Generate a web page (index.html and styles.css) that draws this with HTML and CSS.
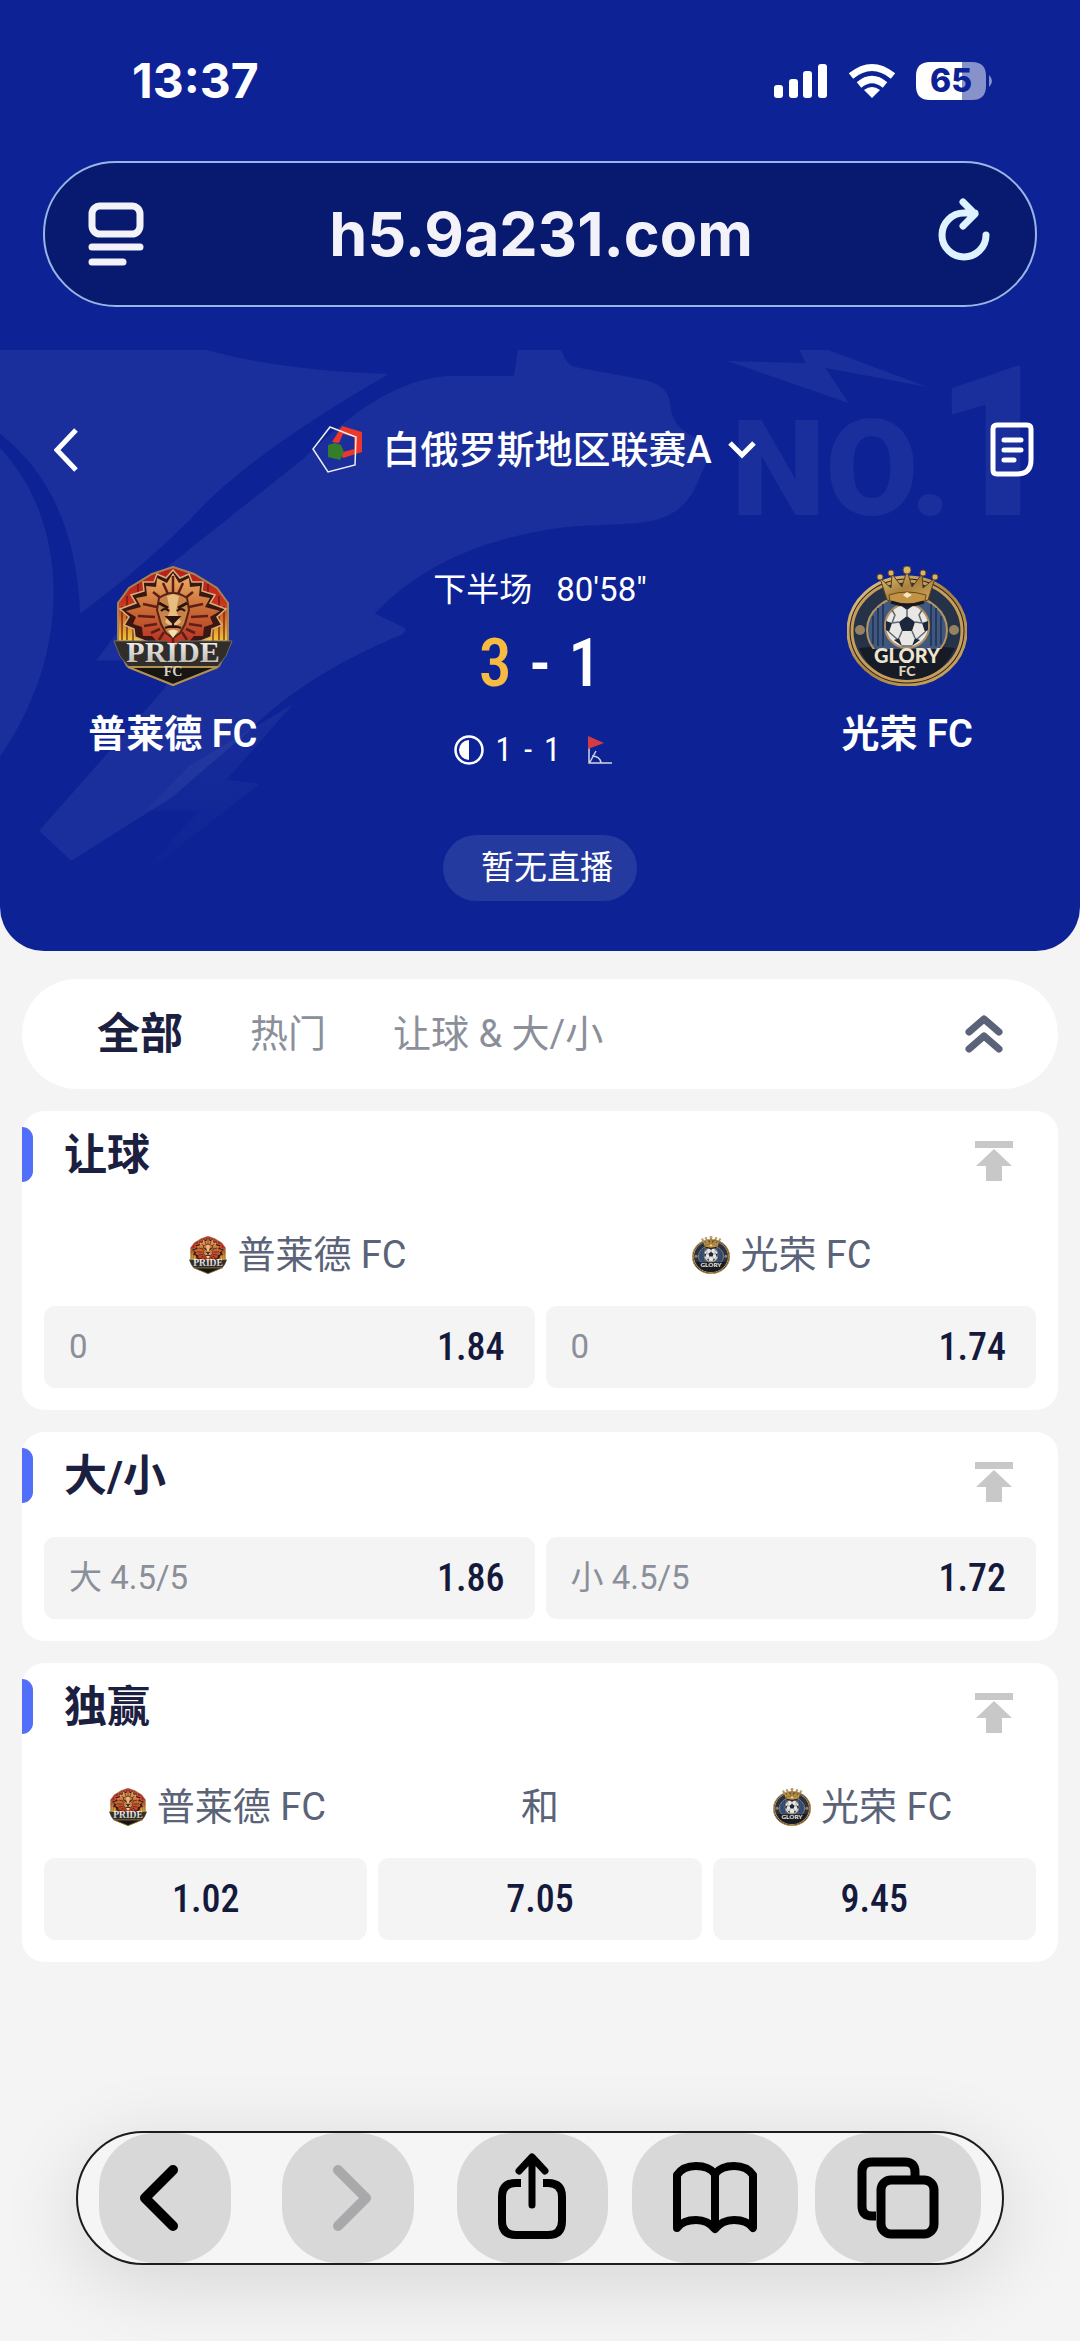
FILE: index.html
```html
<!DOCTYPE html>
<html lang="zh-CN">
<head>
<meta charset="utf-8">
<meta name="viewport" content="width=device-width, initial-scale=1">
<title>普莱德 FC - 光荣 FC</title>
<link rel="stylesheet" href="styles.css">
</head>
<body>
<svg class="defs" aria-hidden="true">
  <defs>
    <linearGradient id="pride-bg" x1="0" y1="0" x2="0" y2="1">
      <stop offset="0" stop-color="#b81d1c"/><stop offset=".3" stop-color="#c8321f"/><stop offset=".62" stop-color="#f0c437"/>
    </linearGradient>
    <linearGradient id="mane" x1="0" y1="0" x2="0" y2="1">
      <stop offset="0" stop-color="#eeb168"/><stop offset=".45" stop-color="#c96a35"/><stop offset="1" stop-color="#b3211d"/>
    </linearGradient>
    <linearGradient id="gold" x1="0" y1="0" x2="1" y2="1">
      <stop offset="0" stop-color="#e8cb8c"/><stop offset=".5" stop-color="#a9803d"/><stop offset="1" stop-color="#d3ab62"/>
    </linearGradient>
    <linearGradient id="silver" x1="0" y1="0" x2="0" y2="1">
      <stop offset="0" stop-color="#fff"/><stop offset="1" stop-color="#b5b0a8"/>
    </linearGradient>
    <linearGradient id="bolt-fade" x1="0" y1="0" x2="0" y2="1">
      <stop offset="0" stop-color="#fff" stop-opacity=".05"/><stop offset="1" stop-color="#fff" stop-opacity="0"/>
    </linearGradient>
  </defs>
  <symbol id="pride" viewBox="0 0 120 120">
    <path d="M60 1 81 8 104 22 115 37V75L118 76 106 100 60 119 14 100 2 76 5 75V37L16 22 39 8Z" fill="url(#pride-bg)" stroke="#a58352" stroke-width="2"/>
    <path d="M9 40V74M14 30V74M20 60V76M111 40V74M106 30V74M100 60V76M25 18V34M31 15V30M95 18V34M89 15V30" stroke="#5a1512" stroke-width="1.5" opacity=".75"/>
    <path d="M60 4 67 12 76 8 79 16 90 16 89 25 102 29 97 37 113 43 104 51 109 59 99 63 98 71 88 75 74 78 60 82 46 78 32 75 22 71 21 63 11 59 16 51 7 43 23 37 18 29 31 25 30 16 41 16 44 8 53 12Z" fill="#3a1712" stroke="#d5b078" stroke-width="1.5"/>
    <path d="M60 7 66 17 76 12 77 21 87 20 86 30 97 32 92 41 107 45 97 51 100 58 91 61 90 70 81 70 74 78 67 79 60 88 53 79 46 78 39 70 30 70 29 61 20 58 23 51 13 45 28 41 23 32 34 30 33 20 43 21 44 12 54 17Z" fill="url(#mane)"/>
    <path d="M60 10V26M50 17 55 28M70 17 65 28M40 26 49 33M80 26 71 33M30 38 44 41M90 38 76 41M25 50 42 51M95 50 78 51M31 60 44 58M89 60 76 58M38 67 47 63M82 67 73 63M46 74 51 66M74 74 69 66M60 86V70" stroke="#5e1d16" stroke-width="2.5" fill="none"/>
    <path d="M46 32Q60 22 74 32L76 44 72 58 67 67 60 72 53 67 48 58 44 44Z" fill="#c98247" stroke="#562319" stroke-width="2"/>
    <path d="M54 30 57 45 52 56 60 62 68 56 63 45 66 30 60 28Z" fill="#e9bd80"/>
    <path d="M46 37 55 42M74 37 65 42" stroke="#291410" stroke-width="3"/>
    <path d="M48 45Q52 41 56 45M72 45Q68 41 64 45" fill="none" stroke="#25120f" stroke-width="2"/>
    <path d="M54 51H66L60 57ZM60 57V61M52 62Q60 58 68 62" fill="#2a1411" stroke="#2a1411" stroke-width="2"/>
    <path d="M55 65Q60 62 65 65L60 72Z" fill="#f3dfb0"/>
    <path d="M1 75H54L60 83 66 75H119L113 90 104 101H16L7 90Z" fill="#302d2b" stroke="#6c675f"/>
    <path d="M15 101H105L60 119Z" fill="#171512" stroke="#b29150" stroke-width="2"/>
  </symbol>
  <symbol id="glory" viewBox="0 0 120 120">
    <ellipse cx="60" cy="65" rx="59" ry="54" fill="#201f26" stroke="url(#gold)" stroke-width="3"/>
    <ellipse cx="60" cy="65" rx="55" ry="50" fill="#253248" stroke="#c69d59" stroke-width="3"/>
    <path d="M12 82Q60 76 108 82 94 113 60 114 25 113 12 82Z" fill="#171b25"/>
    <ellipse cx="60" cy="64" rx="40" ry="34" fill="#40577f" stroke="#b59562" stroke-width="2"/>
    <path d="M26 50V78M31 42V80M36 38V80M84 38V80M89 42V80M94 50V78" stroke="#25395c" stroke-width="2"/>
    <path d="M18 83H102L94 101H26Z" fill="#171b25"/>
    <circle cx="13" cy="64" r="5" fill="#958260"/><circle cx="107" cy="64" r="5" fill="#958260"/>
    <circle cx="60" cy="60" r="22" fill="#e9e8e5" stroke="#b1905a" stroke-width="2"/>
    <path d="M60 50 68 56 65 65H55L52 56ZM53 39H67L60 44ZM39 55 45 57 42 66 39 64ZM81 55 75 57 78 66 81 64ZM47 74 52 72 55 80ZM73 74 68 72 65 80Z" fill="#1d273b"/>
    <path d="M60 50V44M68 56 75 57M65 65 68 72M55 65 52 72M52 56 45 57M45 44 48 49 45 57M75 44 72 49 75 57M42 66 50 73M78 66 70 73M55 80H65" stroke="#5f6675" stroke-width="1.5" fill="none"/>
    <path d="M33 12 44 22 45 8 55 21 60 4 65 21 75 8 76 22 88 12 81 34Q60 41 40 34Z" fill="url(#gold)" stroke="#574017"/>
    <path d="M42 29Q60 23 79 29L78 35Q60 41 43 35Z" fill="#c29345" stroke="#67491c"/>
    <path d="M44 36Q60 42 77 36" stroke="#161820" stroke-width="3" fill="none"/>
    <path d="M56 29 60 26 65 29 60 32Z" fill="#f7e6b8"/>
    <g fill="#d7b36d" stroke="#6b4c1d"><circle cx="60" cy="4" r="4"/><circle cx="44" cy="7" r="3"/><circle cx="76" cy="7" r="3"/><circle cx="33" cy="11" r="3"/><circle cx="88" cy="11" r="3"/></g>
  </symbol>
  <symbol id="to-top" viewBox="0 0 40 40">
    <path d="M1 0H39V7H1ZM20 8 38 25H28V40H12V25H2Z" fill="#c8c8c8"/>
  </symbol>
</svg>

<div class="app">
  <header class="hero">
    <div class="status">
      <time class="clock">13:37</time>
      <div class="status-icons">
        <svg width="54" height="36" viewBox="0 0 54 36" role="img" aria-label="信号"><g fill="#fff"><rect y="22" width="9" height="13" rx="3"/><rect x="15" y="16" width="9" height="19" rx="3"/><rect x="29" y="8" width="9" height="27" rx="3"/><rect x="44" y="1" width="9" height="34" rx="3"/></g></svg>
        <svg width="48" height="36" viewBox="0 0 48 36" role="img" aria-label="无线网络"><g fill="none" stroke="#fff" stroke-width="7"><path d="M3 13Q24-4 45 13"/><path d="M11 22Q24 11 37 22"/></g><path d="M24 35 16 27Q24 21 32 27Z" fill="#fff"/></svg>
        <svg width="76" height="40" viewBox="0 0 76 40" role="img" aria-label="电量 65%"><path d="M14 1H46V39H14Q0 39 0 25V15Q0 1 14 1Z" fill="#fff"/><path d="M46 1H56Q70 1 70 15V25Q70 39 56 39H46Z" fill="#8792cb"/><path d="M73 14Q79 20 73 26Z" fill="#8792cb"/><text x="35" y="31" text-anchor="middle" class="battery-text">65</text></svg>
      </div>
    </div>

    <form class="address">
      <button type="button" class="plain" aria-label="页面菜单"><svg width="56" height="64" viewBox="0 0 56 64" fill="none" stroke="#f3f2f8" stroke-width="7" stroke-linecap="round"><rect x="4" y="4" width="48" height="28" rx="8"/><path d="M4 45H52M4 60H35"/></svg></button>
      <input type="text" aria-label="网址" value="h5.9a231.com">
      <button type="button" class="plain" aria-label="重新加载"><svg width="52" height="72" viewBox="0 0 52 72" fill="none" stroke="#def2ff" stroke-width="7" stroke-linecap="round" stroke-linejoin="round"><path d="M48 37A22 22 0 1 1 26 15H37M25 4 37 16 25 28"/></svg></button>
    </form>

    <div class="match">
      <svg class="pattern" viewBox="0 0 1080 600" preserveAspectRatio="xMidYMin slice" aria-hidden="true">
        <g fill="#1a2f9b">
          <path d="M0 0H207Q280 20 389 24C300 75 230 125 190 170Q140 220 81 263C78 190 55 125 0 83Z"/>
          <path d="M0 97C70 170 75 300 0 407Z"/>
          <path d="M518 0H561Q567 16 575 17L645 30Q665 35 669 49C672 75 680 80 700 90Q712 96 708 108L696 135Q684 163 654 170C620 178 580 170 520 185Q430 205 375 263L404 277Q408 280 402 284C340 310 290 340 250 380L172 447 72 510 40 480 165 338 180 310H97L165 219 234 164 303 109C360 55 400 30 448 26H514Z"/>
          <path d="M727 11 805 13 799 0H828L927 37 825 18 848 53Z"/>
          <text x="731" y="165" class="mark">NO.</text>
          <text x="934" y="165" class="mark mark-one">1</text>
        </g>
        <path d="M293 354 227 429 260 433 131 534 200 460H146L190 415Z" fill="url(#bolt-fade)"/>
      </svg>

      <nav class="match-nav">
        <button type="button" class="plain" aria-label="返回"><svg width="24" height="44" viewBox="0 0 24 44" fill="none" stroke="#fff" stroke-width="5"><path d="M22 2 3 22 22 42"/></svg></button>
        <button type="button" class="plain league">
          <svg width="50" height="48" viewBox="0 0 50 48"><path d="M30 0 50 6V26L31 32 28 27 42 23V11L31 8 27 17 20 16Z" fill="#ec382c"/><path d="M23 17 29 19 32 26 28 34 16 31V19Z" fill="#367d2b"/><path d="M18 1 44 11 43 39 16 46 1 23Z" fill="none" stroke="#eee" stroke-width="1.5"/></svg>
          <span>白俄罗斯地区联赛A</span>
          <svg width="28" height="18" viewBox="0 0 28 18" fill="none" stroke="#fff" stroke-width="5"><path d="M2 2 14 14 26 2"/></svg>
        </button>
        <button type="button" class="plain" aria-label="注单"><svg width="44" height="56" viewBox="0 0 44 56" fill="none" stroke="#fff" stroke-width="5" stroke-linecap="round"><path d="M7 3H37Q41 3 41 7V38Q41 52 27 52H7Q3 52 3 48V7Q3 3 7 3Z"/><path d="M14 18H31M14 28H31M14 38H24"/></svg></button>
      </nav>

      <section class="scoreboard">
        <div class="side">
          <svg class="crest" viewBox="0 0 120 120"><use href="#pride"/><text x="60" y="96" text-anchor="middle" class="crest-pride">PRIDE</text><text x="60" y="110" text-anchor="middle" class="crest-fc-serif">FC</text></svg>
          <h2>普莱德 FC</h2>
        </div>
        <div class="middle">
          <p class="period"><span>下半场</span><span>80'58"</span></p>
          <p class="score"><b>3</b><span>-</span><span>1</span></p>
          <p class="half">
            <svg width="30" height="30" viewBox="0 0 30 30" role="img" aria-label="半场"><circle cx="15" cy="15" r="13.500" fill="none" stroke="#fff" stroke-width="2.500"/><path d="M15 5A10 10 0 0 0 15 25Z" fill="#fff"/></svg>
            <span>1</span><span>-</span><span>1</span>
            <svg width="24" height="28" viewBox="0 0 24 28" role="img" aria-label="角球"><path d="M1 12V27H24M2 26 8 15M4 20Q12 20 13 27" fill="none" stroke="#d2d3df" stroke-width="1.500"/><path d="M0 0 16 7 0 13Z" fill="#d43b43"/></svg>
          </p>
        </div>
        <div class="side">
          <svg class="crest" viewBox="0 0 120 120"><use href="#glory"/><text x="60" y="97" text-anchor="middle" class="crest-glory">GLORY</text><text x="60" y="110" text-anchor="middle" class="crest-fc">FC</text></svg>
          <h2>光荣 FC</h2>
        </div>
      </section>
      <button type="button" class="live">暂无直播</button>
    </div>
  </header>

  <main>
    <nav class="tabs">
      <button type="button" class="plain tab active">全部</button>
      <button type="button" class="plain tab">热门</button>
      <button type="button" class="plain tab">让球 &amp; 大/小</button>
      <button type="button" class="plain fold" aria-label="全部收起"><svg width="38" height="38" viewBox="0 0 38 38" fill="none" stroke="#5a6377" stroke-width="7" stroke-linecap="round" stroke-linejoin="round"><path d="M4 17 19 4 34 17M4 34 19 21 34 34"/></svg></button>
    </nav>

    <section class="card">
      <header class="card-head"><h3>让球</h3><button type="button" class="plain" aria-label="置顶"><svg width="40" height="40"><use href="#to-top"/></svg></button></header>
      <div class="cols heads">
        <div><svg class="mini" viewBox="0 0 120 120"><use href="#pride"/><text x="60" y="96" text-anchor="middle" class="crest-pride">PRIDE</text></svg>普莱德 FC</div>
        <div><svg class="mini" viewBox="0 0 120 120"><use href="#glory"/><text x="60" y="98" text-anchor="middle" class="crest-glory">GLORY</text></svg>光荣 FC</div>
      </div>
      <div class="cols odds"><button type="button"><span>0</span><b>1.84</b></button><button type="button"><span>0</span><b>1.74</b></button></div>
    </section>

    <section class="card">
      <header class="card-head"><h3>大/小</h3><button type="button" class="plain" aria-label="置顶"><svg width="40" height="40"><use href="#to-top"/></svg></button></header>
      <div class="cols odds"><button type="button"><span>大 4.5/5</span><b>1.86</b></button><button type="button"><span>小 4.5/5</span><b>1.72</b></button></div>
    </section>

    <section class="card">
      <header class="card-head"><h3>独赢</h3><button type="button" class="plain" aria-label="置顶"><svg width="40" height="40"><use href="#to-top"/></svg></button></header>
      <div class="cols heads">
        <div><svg class="mini" viewBox="0 0 120 120"><use href="#pride"/><text x="60" y="96" text-anchor="middle" class="crest-pride">PRIDE</text></svg>普莱德 FC</div>
        <div>和</div>
        <div><svg class="mini" viewBox="0 0 120 120"><use href="#glory"/><text x="60" y="98" text-anchor="middle" class="crest-glory">GLORY</text></svg>光荣 FC</div>
      </div>
      <div class="cols odds single"><button type="button"><b>1.02</b></button><button type="button"><b>7.05</b></button><button type="button"><b>9.45</b></button></div>
    </section>
  </main>

  <nav class="toolbar">
    <button type="button" class="narrow" aria-label="后退"><svg width="40" height="66" viewBox="0 0 40 66" fill="none" stroke="#000" stroke-width="10" stroke-linecap="round" stroke-linejoin="round"><path d="M34 5 6 33 34 61"/></svg></button>
    <button type="button" class="narrow forward" aria-label="前进" disabled><svg width="40" height="66" viewBox="0 0 40 66" fill="none" stroke="#a9a9ab" stroke-width="10" stroke-linecap="round" stroke-linejoin="round"><path d="M6 5 34 33 6 61"/></svg></button>
    <button type="button" class="share" aria-label="分享"><svg width="68" height="86" viewBox="0 0 68 86" fill="none" stroke="#000" stroke-width="8" stroke-linecap="round" stroke-linejoin="round"><path d="M23 30H18Q4 30 4 44V68Q4 82 18 82H50Q64 82 64 68V44Q64 30 50 30H45" stroke-linecap="butt"/><path d="M34 52V5M21 18 34 4 47 18" stroke-width="7"/></svg></button>
    <button type="button" class="wide" aria-label="书签"><svg width="84" height="72" viewBox="0 0 84 72" fill="none" stroke="#000" stroke-width="8" stroke-linejoin="round" stroke-linecap="round"><path d="M42 12Q36 4 23 4 10 4 4 13V66Q10 58 23 58 35 58 42 67 49 58 61 58 74 58 80 66V13Q74 4 61 4 48 4 42 12V66"/></svg></button>
    <button type="button" class="wide" aria-label="标签页"><svg width="82" height="82" viewBox="0 0 82 82" fill="none" stroke="#000" stroke-width="9"><path d="M19 59H15Q5 59 5 49V15Q5 5 15 5H48Q58 5 58 15V19"/><rect x="24" y="23" width="53" height="54" rx="10"/></svg></button>
  </nav>
</div>
</body>
</html>
```
FILE: styles.css
```css
* { box-sizing: border-box; }

body {
  margin: 0;
  background: #f4f4f4;
  color: #1c2040;
  font-family: Roboto, "Noto Sans CJK SC", sans-serif;
}

h2, h3, p { margin: 0; }
svg { display: block; flex: none; }
button { font: inherit; color: inherit; border: 0; padding: 0; }
.plain { background: none; }
.defs { position: absolute; width: 0; height: 0; }

.app { min-height: 100vh; display: flex; flex-direction: column; }

.hero {
  background: #0d2395;
  color: #fff;
  border-radius: 0 0 44px 44px;
  overflow: hidden;
}

.status {
  height: 161px;
  padding: 0 88px 0 132px;
  display: flex;
  align-items: center;
  justify-content: space-between;
}
.clock { font: 700 48px/56px Inter, sans-serif; }
.status-icons { display: flex; align-items: center; gap: 20px; }
.battery-text { font: 800 32px Inter, sans-serif; fill: #0d2395; }

.address {
  height: 146px;
  margin: 0 43px 43px;
  padding: 0 45px 0 43px;
  display: flex;
  align-items: center;
  background: #071a70;
  border: 2px solid #98b5e6;
  border-radius: 73px;
}
.address input {
  flex: 1;
  min-width: 0;
  border: 0;
  padding: 0;
  background: none;
  color: #f3f2f8;
  text-align: center;
  font: 700 61px/80px Inter, sans-serif;
}

.match { position: relative; padding: 72px 0 50px; }
.pattern { position: absolute; inset: 0; width: 100%; height: 100%; }
.match > :not(.pattern) { position: relative; }
.mark { font: 900 134px Roboto, sans-serif; }
.mark-one { font-size: 209px; }

.match-nav {
  height: 56px;
  margin-bottom: 88px;
  padding: 0 46px 0 54px;
  display: flex;
  align-items: center;
  justify-content: space-between;
}
.league {
  display: flex;
  align-items: center;
  gap: 16px;
  font-size: 38px;
  line-height: 56px;
  font-weight: 500;
}
.league span { margin-left: 4px; }

.scoreboard { display: flex; }
.side {
  width: 32%;
  display: flex;
  flex-direction: column;
  align-items: center;
  gap: 20px;
}
.side h2 { font-size: 38px; line-height: 56px; font-weight: 600; }
.crest { width: 120px; height: 120px; }
.mini { width: 38px; height: 38px; }
.crest-pride { font: 700 30px "Liberation Serif", serif; fill: url(#silver); }
.crest-fc-serif { font: 700 14px "Liberation Serif", serif; fill: #d5d0c6; }
.crest-glory { font: 900 20px Lato, sans-serif; fill: #eee5d0; }
.crest-fc { font: 900 14px Lato, sans-serif; fill: #e0d5bc; }

.middle { flex: 1; display: flex; flex-direction: column; align-items: center; }
.period { display: flex; gap: 24px; font-size: 33px; line-height: 48px; }
.score, .half span, .odds b {
  font-family: "Roboto Condensed", "Liberation Sans Narrow", Roboto, sans-serif;
}
.score {
  display: flex;
  gap: 18px;
  margin: 18px 0 34px;
  font-size: 66px;
  line-height: 64px;
  font-weight: 500;
}
.score b { color: #f6bb40; font-weight: 500; }
.half {
  display: flex;
  align-items: center;
  gap: 12px;
  padding-right: 14px;
  font-size: 33px;
  line-height: 40px;
}
.half svg:last-child { margin-left: 16px; }

.live {
  display: block;
  height: 66px;
  margin: 65px auto 0;
  padding: 0 24px 0 38px;
  border-radius: 33px;
  background: #243a9e;
  font-size: 33px;
  line-height: 48px;
}

main { display: flex; flex-direction: column; gap: 22px; padding: 28px 22px 0; }

.tabs {
  height: 110px;
  padding: 0 55px 0 75px;
  display: flex;
  align-items: center;
  gap: 67px;
  background: #fff;
  border-radius: 55px;
}
.tab { font-size: 38px; line-height: 56px; color: #8b8f99; }
.tab.active { font-size: 43px; font-weight: 700; color: #1c2040; }
.fold { margin-left: auto; }

.card { background: #fff; border-radius: 22px; padding: 16px 22px 22px; }
.card-head {
  height: 56px;
  margin: 0 0 33px -22px;
  padding: 0 22px 0 42px;
  display: flex;
  align-items: flex-end;
  justify-content: space-between;
  position: relative;
}
.card-head::before {
  content: "";
  position: absolute;
  left: 0;
  top: 0;
  width: 11px;
  height: 55px;
  border-radius: 0 11px 11px 0;
  background: #526ffa;
}
.card-head h3 { font-size: 43px; line-height: 56px; font-weight: 700; }
.card-head button { padding-bottom: 2px; }

.cols { display: grid; grid-auto-flow: column; grid-auto-columns: minmax(0, 1fr); }
.heads {
  padding: 20px 12px 32px;
  color: #5a6377;
  font-size: 38px;
  line-height: 38px;
}
.heads div { display: flex; justify-content: center; align-items: center; gap: 10px; }
.card-head + .heads { margin-top: -33px; padding-top: 53px; }

.odds { gap: 11px; }
.odds button {
  height: 82px;
  padding: 0 30px 0 25px;
  display: flex;
  align-items: center;
  justify-content: space-between;
  background: #f4f4f4;
  border-radius: 11px;
}
.odds span { font-size: 33px; line-height: 48px; color: #8b8f99; }
.odds b { font-size: 38px; line-height: 48px; font-weight: 500; color: #151a3d; }
.odds.single button { justify-content: center; padding: 0; }

.toolbar {
  height: 134px;
  margin: auto 76px 76px;
  padding: 0 21px;
  display: flex;
  justify-content: space-between;
  background: #f5f5f5;
  border: 2px solid #1c1c1c;
  border-radius: 67px;
  box-shadow: 0 16px 80px rgba(0, 0, 0, .13);
}
.toolbar button {
  display: flex;
  align-items: center;
  justify-content: center;
  background: #d8d8d8;
  border-radius: 56px;
}
.toolbar .narrow { width: 132px; margin-right: 34px; padding-right: 12px; }
.toolbar .forward { margin-right: 25px; padding: 0 0 0 8px; }
.toolbar .share { width: 151px; margin-right: 7px; padding-bottom: 4px; }
.toolbar .wide { width: 166px; }
```
